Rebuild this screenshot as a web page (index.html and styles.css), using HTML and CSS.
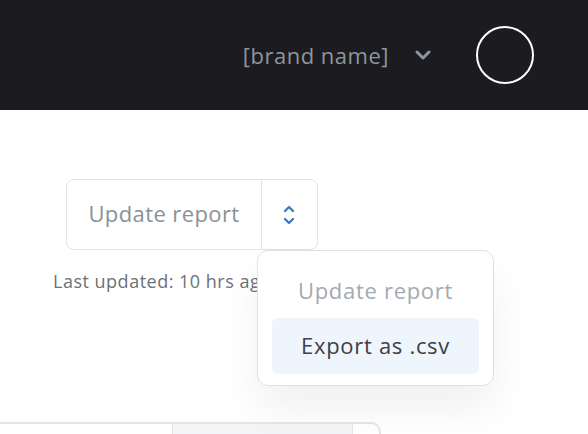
FILE: index.html
```html
<!DOCTYPE html>
<html lang="en">

<head>
    <meta charset="UTF-8">
    <meta name="viewport" content="width=device-width, initial-scale=1.0">
    <title>Report</title>
    <link rel="stylesheet" href="styles.css">
</head>

<body>
    <div class="topbar">
        <div class="brand">[brand name]</div>
        <svg class="brand-caret" width="18" height="12" viewBox="0 0 18 12">
            <path d="M3 3 L9 9 L15 3" fill="none" stroke="#8d969c" stroke-width="3" stroke-linecap="round" stroke-linejoin="round" />
        </svg>
        <div class="avatar"></div>
    </div>
    <div class="main">
        <div class="actions">
            <div class="split">
                <div class="split-label">Update report</div>
                <div class="split-toggle">
                    <svg width="14" height="22" viewBox="0 0 14 22">
                        <path d="M3 7 L7 3 L11 7 M3 15 L7 19 L11 15" fill="none" stroke="#3f7cc3" stroke-width="2.4" stroke-linecap="round" stroke-linejoin="round" />
                    </svg>
                </div>
            </div>
            <div class="updated">Last updated: 10 hrs ago</div>
            <div class="menu">
                <div class="menu-item muted">Update report</div>
                <div class="menu-item active">Export as .csv</div>
            </div>
        </div>
        <div class="table-head">
            <div class="col"></div>
            <div class="col grey"></div>
            <div class="col last"></div>
        </div>
    </div>
</body>

</html>
```

FILE: styles.css
```css
*{margin:0;padding:0;box-sizing:border-box;}
body{font-family:"Open Sans","Lato",sans-serif;background:#fff;width:588px;height:434px;overflow:hidden;}
.topbar{height:110px;background:#1c1c20;display:flex;align-items:center;justify-content:flex-end;padding-right:54px;}
.brand{color:#8d969c;font-size:22px;letter-spacing:0.5px;}
.brand-caret{margin-left:25px;margin-right:44px;}
.avatar{width:58px;height:58px;border:2px solid #fff;border-radius:50%;}
.main{position:relative;padding-top:69px;}
.actions{position:relative;margin-left:53px;height:243px;}
.split{display:flex;width:252px;height:71px;margin-left:13px;border:1px solid #dfe3e6;border-radius:8px;}
.split-label{width:195px;display:flex;align-items:center;justify-content:center;padding-bottom:3px;font-size:22px;letter-spacing:0.4px;color:#8a9197;border-right:1px solid #dfe3e6;}
.split-toggle{flex:1;display:flex;align-items:center;justify-content:center;}
.split-toggle svg{margin-right:1px;}
.updated{margin-top:19px;font-size:18px;letter-spacing:0.5px;color:#6c7176;}
.menu{position:absolute;left:204px;top:71px;width:237px;padding:15px 14px 11px;background:#fff;border:1.5px solid #dfe2e4;border-radius:11px;box-shadow:0 24px 40px rgba(0,0,0,0.06);}
.menu-item{height:56px;display:flex;align-items:center;justify-content:center;padding-bottom:2px;font-size:22px;letter-spacing:0.7px;border-radius:6px;}
.menu-item.muted{height:52px;padding-bottom:4px;color:#a4aab0;}
.menu-item.active{background:#eef5fc;color:#3b4046;}
.table-head{display:flex;width:381px;height:20px;border-top:2px solid #e2e6e8;border-right:2px solid #e2e6e8;border-top-right-radius:10px;}
.col{width:172px;}
.col.grey{width:181px;background:#f3f5f7;border-left:1.5px solid #e2e6e8;border-right:1.5px solid #e2e6e8;}
.col.last{flex:1;}
```
